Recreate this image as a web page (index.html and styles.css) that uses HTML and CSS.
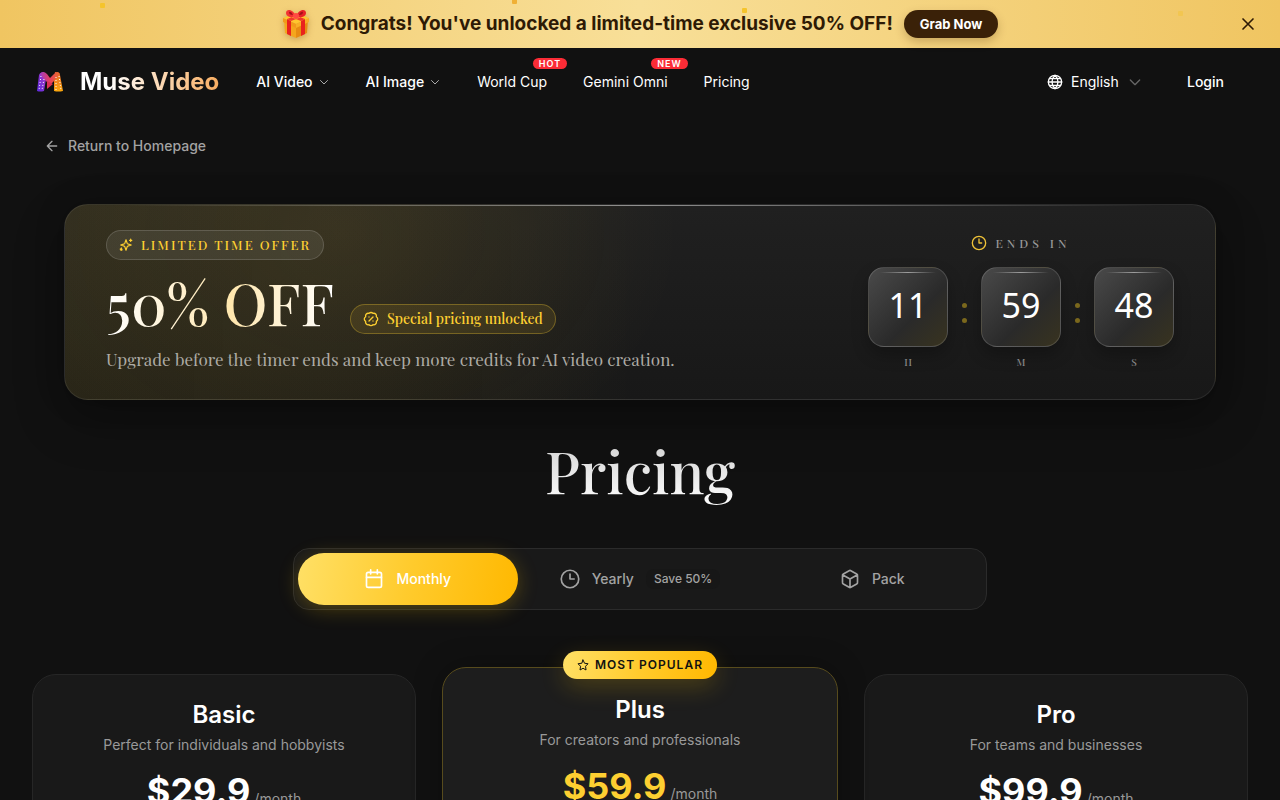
FILE: index.html
```html
<!doctype html>
<html lang="en">
    <head>
        <meta charset="UTF-8" />
        <meta name="viewport" content="width=device-width, initial-scale=1.0" />
        <title>Pricing - Muse Video</title>
        <link rel="stylesheet" href="styles.css">
    </head>
    <body>
        <div class="promo">
            <div class="promo-content">
                <svg class="gift" viewBox="0 0 28 30" aria-hidden="true">
                    <path d="M2 10 14 15v14L3 24z" fill="#f5a61d" />
                    <path d="M26 10 14 15v14l11-5z" fill="#e88b12" />
                    <path d="M1 9 14 4l13 5-13 6z" fill="#ffc62e" />
                    <path d="M1 9v4l13 6v-4z" fill="#f29a1a" />
                    <path d="M27 9v4l-13 6v-4z" fill="#f8af25" />
                    <path d="m5 10 4 2v15l-4-2zM23 10l-4 2v15l4-2z" fill="#e9231d" />
                    <path d="m5 10 4 2 13-5-4-2zM23 10l-4 2L6 7l4-2z" fill="#f03a2c" />
                    <path d="M14 8C10 9 4 8 4 4c0-5 8-4 10 4z" fill="#f33232" />
                    <path d="M14 8c4 1 10 0 10-4 0-5-8-4-10 4z" fill="#e92228" />
                    <path d="M11 6C8 6 7 5 7 3c1-1 3 0 4 3zM17 6c3 0 4-1 4-3-1-1-3 0-4 3z" fill="#a90f18" />
                    <ellipse cx="14" cy="7" rx="3" ry="3" fill="#ff4b43" />
                </svg>
                <strong class="promo-text">Congrats! You've unlocked a limited-time exclusive 50% OFF!</strong>
                <button class="grab">Grab Now</button>
            </div>
            <span class="confetti c1"></span>
            <span class="confetti c2"></span>
            <span class="confetti c3"></span>
            <span class="confetti c4"></span>
            <button class="promo-close" aria-label="Close">
                <svg class="icon" width="20" height="20" viewBox="0 0 24 24"><path d="M18 6 6 18M6 6l12 12" /></svg>
            </button>
        </div>

        <header class="header">
            <a class="brand" href="#">
                <svg width="28" height="28" viewBox="0 0 28 28" aria-hidden="true">
                    <defs>
                        <linearGradient id="logoLeft" x1="0" y1="1" x2="1" y2="0">
                            <stop offset="0" stop-color="#5a2be0" />
                            <stop offset="1" stop-color="#b13bc4" />
                        </linearGradient>
                        <linearGradient id="logoRight" x1="0" y1="0" x2="0" y2="1">
                            <stop offset="0" stop-color="#e8672c" />
                            <stop offset="1" stop-color="#fba90d" />
                        </linearGradient>
                        <linearGradient id="logoMid" x1="0" y1="0" x2="1" y2="0">
                            <stop offset="0" stop-color="#a03cc0" />
                            <stop offset=".5" stop-color="#e83f5d" />
                            <stop offset="1" stop-color="#ec7026" />
                        </linearGradient>
                    </defs>
                    <path d="M3 7q1-3 5-3l2 7-2 12q-4 1-7 0z" fill="url(#logoLeft)" />
                    <path d="M24 7q-1-3-5-3l-1 7v12q4 1 9 0z" fill="url(#logoRight)" />
                    <path d="M4 6q3-4 7 0l3 4 4-4q4-4 6 0l-5 6-5 5-5-5z" fill="url(#logoMid)" />
                    <path d="m11 13 6 3-6 5z" fill="#db3053" />
                    <path d="M5 8 3 22M8 11 6 22M20 9v13M23 8l2 14" stroke="#fff" stroke-width="1" stroke-dasharray="1 2" fill="none" />
                </svg>
                <span class="brand-name">Muse Video</span>
            </a>
            <nav class="nav">
                <button class="nav-item strong">AI Video
                    <svg class="icon" width="12" height="12" viewBox="0 0 24 24"><path d="m5 9 7 7 7-7" /></svg>
                </button>
                <button class="nav-item strong">AI Image
                    <svg class="icon" width="12" height="12" viewBox="0 0 24 24"><path d="m5 9 7 7 7-7" /></svg>
                </button>
                <a class="nav-item" href="#">World Cup<span class="tag">HOT</span></a>
                <a class="nav-item" href="#">Gemini Omni<span class="tag">NEW</span></a>
                <a class="nav-item" href="#">Pricing</a>
            </nav>
            <div class="account">
                <label class="language">
                    <svg class="icon" width="16" height="16" viewBox="0 0 24 24" aria-label="Language">
                        <circle cx="12" cy="12" r="10" />
                        <path d="M2 12h20M4 7h16M4 17h16M12 2c-6 6-6 14 0 20 6-6 6-14 0-20z" />
                    </svg>
                    <select>
                        <option>English</option>
                    </select>
                    <svg class="icon chevron" width="16" height="16" viewBox="0 0 24 24"><path d="m5 9 7 7 7-7" /></svg>
                </label>
                <a class="login" href="#">Login</a>
            </div>
        </header>

        <main class="page">
            <a class="back" href="#">
                <svg class="icon" width="16" height="16" viewBox="0 0 24 24"><path d="m12 19-7-7 7-7M19 12H5" /></svg>
                Return to Homepage
            </a>

            <section class="offer">
                <div class="offer-info">
                    <span class="pill offer-label">
                        <svg class="icon" width="14" height="14" viewBox="0 0 24 24">
                            <path d="m12 3-2 6a2 2 0 0 1-1 1l-6 2 6 2a2 2 0 0 1 1 1l2 6 2-6a2 2 0 0 1 1-1l6-2-6-2a2 2 0 0 1-1-1zM20 2v4M22 4h-4M4 17v3M5 19H2" />
                            <circle cx="4" cy="20" r="1" />
                        </svg>
                        LIMITED TIME OFFER
                    </span>
                    <div class="offer-row">
                        <h2>50% OFF</h2>
                        <span class="pill unlocked">
                            <svg class="icon" width="16" height="16" viewBox="0 0 24 24">
                                <path d="M4 8.600a4 4 0 0 1 5-5 4 4 0 0 1 6 0 4 4 0 0 1 5 5 4 4 0 0 1 0 7 4 4 0 0 1-5 5 4 4 0 0 1-6 0 4 4 0 0 1-5-5 4 4 0 0 1 0-7zM15 9l-6 6M9 9h.01M15 15h.01" />
                            </svg>
                            Special pricing unlocked
                        </span>
                    </div>
                    <p>Upgrade before the timer ends and keep more credits for AI video creation.</p>
                </div>
                <div class="timer">
                    <div class="timer-label">
                        <svg class="icon" width="16" height="16" viewBox="0 0 24 24"><circle cx="12" cy="12" r="10" /><path d="M12 6v6h4" /></svg>
                        ENDS IN
                    </div>
                    <div class="timer-row">
                        <div class="unit"><span class="digits">11</span><small>H</small></div>
                        <span class="colon"></span>
                        <div class="unit"><span class="digits">59</span><small>M</small></div>
                        <span class="colon"></span>
                        <div class="unit"><span class="digits">48</span><small>S</small></div>
                    </div>
                </div>
            </section>

            <h1>Pricing</h1>

            <div class="tabs">
                <button class="tab active">
                    <svg class="icon" width="20" height="20" viewBox="0 0 24 24"><rect x="3" y="4" width="18" height="18" rx="2" /><path d="M8 1v5M16 1v5M3 10h18" /></svg>
                    Monthly
                </button>
                <button class="tab">
                    <svg class="icon" width="20" height="20" viewBox="0 0 24 24"><circle cx="12" cy="12" r="10.500" /><path d="M12 6v6h5" /></svg>
                    Yearly
                    <span class="save">Save 50%</span>
                </button>
                <button class="tab">
                    <svg class="icon" width="20" height="20" viewBox="0 0 24 24"><path d="M21 8a2 2 0 0 0-1-2l-7-4a2 2 0 0 0-2 0L4 6a2 2 0 0 0-1 2v8a2 2 0 0 0 1 2l7 4a2 2 0 0 0 2 0l7-4a2 2 0 0 0 1-2zM3 7l9 5 9-5M12 22V12" /></svg>
                    Pack
                </button>
            </div>

            <div class="plans">
                <article class="plan">
                    <h3>Basic</h3>
                    <p>Perfect for individuals and hobbyists</p>
                    <div class="price"><strong>$29.9</strong><span>/month</span></div>
                </article>
                <article class="plan featured">
                    <span class="popular">
                        <svg class="icon" width="12" height="12" viewBox="0 0 24 24"><path d="m12 2 3 6.500 7 1-5 5 1 7.500-6-3.500L6 22l1-7.500-5-5 7-1z" /></svg>
                        MOST POPULAR
                    </span>
                    <h3>Plus</h3>
                    <p>For creators and professionals</p>
                    <div class="price"><strong>$59.9</strong><span>/month</span></div>
                </article>
                <article class="plan">
                    <h3>Pro</h3>
                    <p>For teams and businesses</p>
                    <div class="price"><strong>$99.9</strong><span>/month</span></div>
                </article>
            </div>
        </main>
    </body>
</html>
```
FILE: styles.css
```css
* {
    box-sizing: border-box;
}

body {
    margin: 0;
    background: #111;
    color: #fff;
    font-family: Inter, sans-serif;
    font-size: 14px;
    line-height: 20px;
}

h1,
h2,
h3,
p {
    margin: 0;
}

a {
    color: inherit;
    text-decoration: none;
}

button,
select {
    border: 0;
    padding: 0;
    background: none;
    color: inherit;
    font: inherit;
    cursor: pointer;
}

.icon {
    flex: none;
    fill: none;
    stroke: currentColor;
    stroke-width: 2;
    stroke-linecap: round;
    stroke-linejoin: round;
}

/* Promo bar */
.promo {
    position: relative;
    display: flex;
    align-items: center;
    justify-content: center;
    height: 48px;
    background: linear-gradient(90deg, #f0c561, #f8df98 50%, #f0c561);
    color: #2e1a05;
}

.promo-content {
    display: flex;
    align-items: center;
    gap: 11px;
}

.gift {
    width: 28px;
    height: 30px;
    filter: drop-shadow(0 2px 3px rgba(120, 60, 0, 0.3));
}

.promo-text {
    font-size: 19px;
    font-weight: 700;
    line-height: 28px;
}

.grab {
    height: 28px;
    padding: 0 16px;
    border-radius: 14px;
    background: #3a2108;
    color: #fff;
    font-size: 13px;
    font-weight: 700;
    box-shadow: 0 4px 10px rgba(80, 45, 0, 0.25);
}

.promo-close {
    position: absolute;
    top: 14px;
    right: 22px;
    height: 20px;
}

.confetti {
    position: absolute;
    width: 5px;
    height: 5px;
    border-radius: 1px;
    background: #f5c42c;
}

.c1 { left: 100px; top: 3px; }
.c2 { left: 40%; top: -1px; background: #f0b035; }
.c3 { left: 58%; top: 8px; }
.c4 { left: 92%; top: 11px; opacity: 0.4; }

/* Header */
.header {
    display: flex;
    align-items: center;
    height: 68px;
    padding: 0 56px 0 36px;
}

.brand {
    display: flex;
    align-items: center;
    gap: 16px;
}

.brand-name {
    background: linear-gradient(90deg, #fff 20%, #f8ad61);
    background-clip: text;
    color: transparent;
    font-size: 24px;
    font-weight: 700;
    line-height: 32px;
}

.nav {
    display: flex;
    align-items: center;
    gap: 36px;
    margin-left: 37px;
}

.nav-item {
    position: relative;
    display: flex;
    align-items: center;
    gap: 5px;
    white-space: nowrap;
}

.nav-item.strong {
    font-weight: 500;
}

.nav-item .icon {
    color: #aaa;
}

.tag {
    position: absolute;
    top: -14px;
    right: -20px;
    padding: 0 6px;
    border-radius: 6px;
    background: #fb2c36;
    font-size: 9px;
    font-weight: 600;
    line-height: 11px;
    letter-spacing: 1px;
}

.account {
    display: flex;
    align-items: center;
    gap: 44px;
    margin-left: auto;
    font-weight: 500;
}

.language {
    display: flex;
    align-items: center;
    gap: 8px;
}

.language select {
    appearance: none;
    font-weight: 400;
}

.language .chevron {
    color: #666;
}

/* Page */
.page {
    padding: 20px 32px 32px;
}

.back {
    display: inline-flex;
    align-items: center;
    gap: 8px;
    margin-left: 12px;
    color: #a3a3a3;
    font-weight: 500;
}

/* Offer card */
.offer {
    display: flex;
    justify-content: space-between;
    margin: 45px 32px 0;
    padding: 25px 41px 28px;
    border: 1px solid rgba(255, 255, 255, 0.08);
    border-radius: 24px;
    background:
        linear-gradient(90deg, transparent 5%, rgba(255, 255, 255, 0.5) 50%, transparent 95%) top / 100% 1px no-repeat,
        radial-gradient(ellipse 400px 300px at 24% 15%, rgba(255, 205, 50, 0.08), transparent 85%),
        linear-gradient(90deg, rgba(250, 204, 21, 0.08), transparent 50%),
        linear-gradient(180deg, #202020, #181818);
    box-shadow: 0 20px 50px rgba(0, 0, 0, 0.3), 0 0 30px rgba(0, 0, 0, 0.2);
    font-family: "Playfair Display", "Liberation Serif", serif;
}

.pill {
    display: inline-flex;
    align-items: center;
    gap: 8px;
    height: 30px;
    padding: 0 12px;
    border: 1px solid rgba(255, 255, 255, 0.15);
    border-radius: 15px;
    background: rgba(255, 255, 255, 0.08);
    color: #fdcf31;
}

.offer-label {
    font-size: 13px;
    font-weight: 500;
    letter-spacing: 2px;
}

.offer-row {
    display: flex;
    align-items: flex-end;
    gap: 16px;
    margin-top: 8px;
}

.offer h2 {
    background: linear-gradient(90deg, #fff, #ffe7ae 55%, #fff);
    background-clip: text;
    color: transparent;
    font-size: 58px;
    font-weight: 500;
    line-height: 68px;
}

.unlocked {
    margin-bottom: 2px;
    border-color: rgba(253, 207, 49, 0.3);
    background: rgba(253, 207, 49, 0.1);
    font-weight: 500;
}

.offer p {
    margin-top: 11px;
    color: #adaba5;
    font-size: 17px;
    line-height: 24px;
}

.timer {
    display: flex;
    flex-direction: column;
    align-items: center;
}

.timer-label {
    display: flex;
    align-items: center;
    gap: 8px;
    margin: 3px 0 14px;
    color: #999;
    font-size: 12px;
    font-weight: 500;
    letter-spacing: 4px;
}

.timer-label .icon {
    color: #eec238;
}

.timer-row {
    display: flex;
    gap: 14px;
}

.unit {
    display: flex;
    flex-direction: column;
    align-items: center;
    gap: 7px;
}

.unit small {
    color: #888;
    font-size: 10px;
    font-weight: 500;
    line-height: 16px;
}

.digits {
    display: flex;
    align-items: center;
    justify-content: center;
    width: 80px;
    height: 80px;
    padding-bottom: 4px;
    border: 1px solid rgba(255, 255, 255, 0.15);
    border-radius: 16px;
    background:
        linear-gradient(90deg, transparent, rgba(255, 255, 255, 0.5), transparent) center 4px / 56px 1px no-repeat,
        linear-gradient(135deg, #4a4a4a, #2a2a2a 60%, #38331f);
    box-shadow: 0 8px 16px rgba(0, 0, 0, 0.25);
    font-family: "Noto Sans", sans-serif;
    font-size: 34px;
    line-height: 40px;
}

.colon {
    display: flex;
    flex-direction: column;
    gap: 10px;
    margin-top: 36px;
}

.colon::before,
.colon::after {
    content: "";
    width: 5px;
    height: 5px;
    border-radius: 50%;
    background: #7b681d;
}

h1 {
    margin-top: 32px;
    background: linear-gradient(180deg, #ccc, #fff);
    background-clip: text;
    color: transparent;
    font-family: "Playfair Display", "Liberation Serif", serif;
    font-size: 58px;
    font-weight: 500;
    line-height: 76px;
    text-align: center;
}

/* Billing tabs */
.tabs {
    display: flex;
    gap: 4px;
    width: fit-content;
    margin: 40px auto 0;
    padding: 4px;
    border: 1px solid #2b2b2b;
    border-radius: 16px;
    background: #191919;
}

.tab {
    display: flex;
    align-items: center;
    justify-content: center;
    gap: 12px;
    min-width: 220px;
    height: 52px;
    padding: 0 38px;
    border-radius: 26px;
    color: #a3a3a3;
    font-weight: 500;
}

.tab.active {
    background: linear-gradient(100deg, #ffe066, #ffcb2d 50%, #ffb800);
    color: #fff;
    box-shadow: 0 4px 20px rgba(255, 200, 0, 0.25);
}

.save {
    padding: 0 8px;
    border-radius: 8px;
    background: #171717;
    font-size: 12px;
}

/* Plans */
.plans {
    display: grid;
    grid-template-columns: 32fr 33fr 32fr;
    gap: 26px;
    margin-top: 57px;
}

.plan {
    margin-top: 7px;
    padding: 24px 32px 32px;
    border: 1px solid #262626;
    border-radius: 24px;
    background: #191919;
    text-align: center;
}

.plan h3 {
    font-size: 24px;
    font-weight: 600;
    line-height: 32px;
}

.plan p {
    margin-top: 4px;
    color: #999;
}

.price {
    display: flex;
    align-items: baseline;
    justify-content: center;
    gap: 4px;
    margin-top: 16px;
    color: #999;
}

.price strong {
    color: #fff;
    font-size: 36px;
    line-height: 40px;
}

.plan.featured {
    position: relative;
    margin-top: 0;
    padding-top: 26px;
    border-color: #574b1d;
    background: #1d1d1d;
    box-shadow: 0 0 30px rgba(0, 0, 0, 0.3);
}

.featured .price strong {
    color: #fdcf31;
}

.popular {
    position: absolute;
    top: -17px;
    left: 50%;
    transform: translateX(-50%);
    display: flex;
    align-items: center;
    gap: 6px;
    height: 28px;
    padding: 0 14px;
    border-radius: 14px;
    background: linear-gradient(100deg, #ffe066, #ffcb2d 50%, #ffb800);
    color: #111;
    font-size: 12px;
    font-weight: 600;
    letter-spacing: 1px;
    white-space: nowrap;
    box-shadow: 0 8px 24px rgba(255, 200, 0, 0.2);
}
```
